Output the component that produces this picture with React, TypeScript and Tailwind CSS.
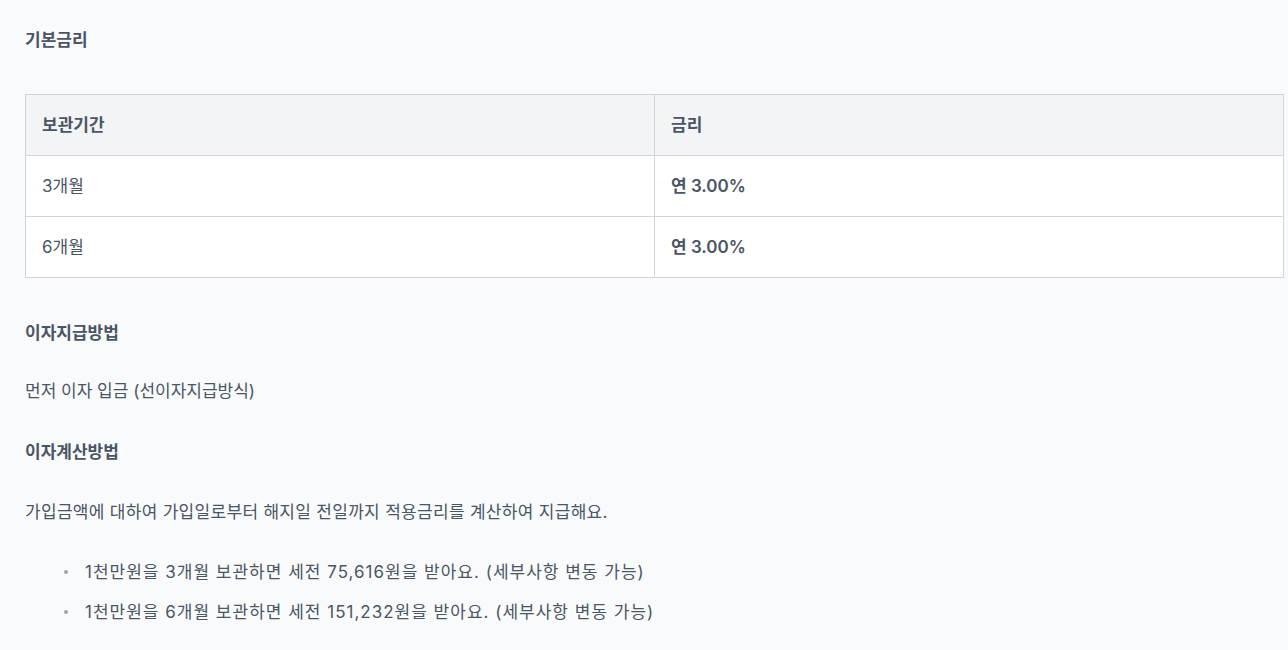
import React from "react";

const font = { fontFamily: '"Inter", "Noto Sans CJK KR", sans-serif' };

export default function App() {
  const rows = [
    ["3개월", "연 3.00%"],
    ["6개월", "연 3.00%"],
  ];
  return (
    <div
      className="min-h-[650px] w-full bg-[#f9fafb] pl-[25px] pr-[4px] pt-[28px] text-[17px] leading-[24px] text-[#4b5563]"
      style={font}
    >
      <h2 className="font-semibold text-[#4b5563]">기본금리</h2>
      <table className="mt-[42px] w-[1259px] table-fixed border-collapse border border-[#d1d5db] bg-white">
        <thead>
          <tr className="bg-[#f3f4f6]">
            <th className="h-[61px] w-[629px] border border-[#d1d5db] pl-[16px] text-left font-semibold">
              보관기간
            </th>
            <th className="h-[61px] border border-[#d1d5db] pl-[16px] text-left font-semibold">
              금리
            </th>
          </tr>
        </thead>
        <tbody>
          {rows.map(([a, b], i) => (
            <tr key={i}>
              <td className="h-[61px] border border-[#d1d5db] pl-[16px] font-normal">{a}</td>
              <td className="h-[61px] border border-[#d1d5db] pl-[16px] font-semibold">{b}</td>
            </tr>
          ))}
        </tbody>
      </table>
      <h3 className="mt-[43px] font-semibold">이자지급방법</h3>
      <p className="mt-[34px]">먼저 이자 입금 (선이자지급방식)</p>
      <h3 className="mt-[37px] font-semibold">이자계산방법</h3>
      <p className="mt-[36px] tracking-[0.3px]">가입금액에 대하여 가입일로부터 해지일 전일까지 적용금리를 계산하여 지급해요.</p>
      <ul className="mt-[36px] flex flex-col gap-[16px] pl-[39px]">
        <li className="flex items-center tracking-[1px]">
          <span className="mr-[17px] h-[4px] w-[4px] rounded-full bg-[#9ca3af]" />
          1천만원을 3개월 보관하면 세전 75,616원을 받아요. (세부사항 변동 가능)
        </li>
        <li className="flex items-center tracking-[1px]">
          <span className="mr-[17px] h-[4px] w-[4px] rounded-full bg-[#9ca3af]" />
          1천만원을 6개월 보관하면 세전 151,232원을 받아요. (세부사항 변동 가능)
        </li>
      </ul>
    </div>
  );
}
